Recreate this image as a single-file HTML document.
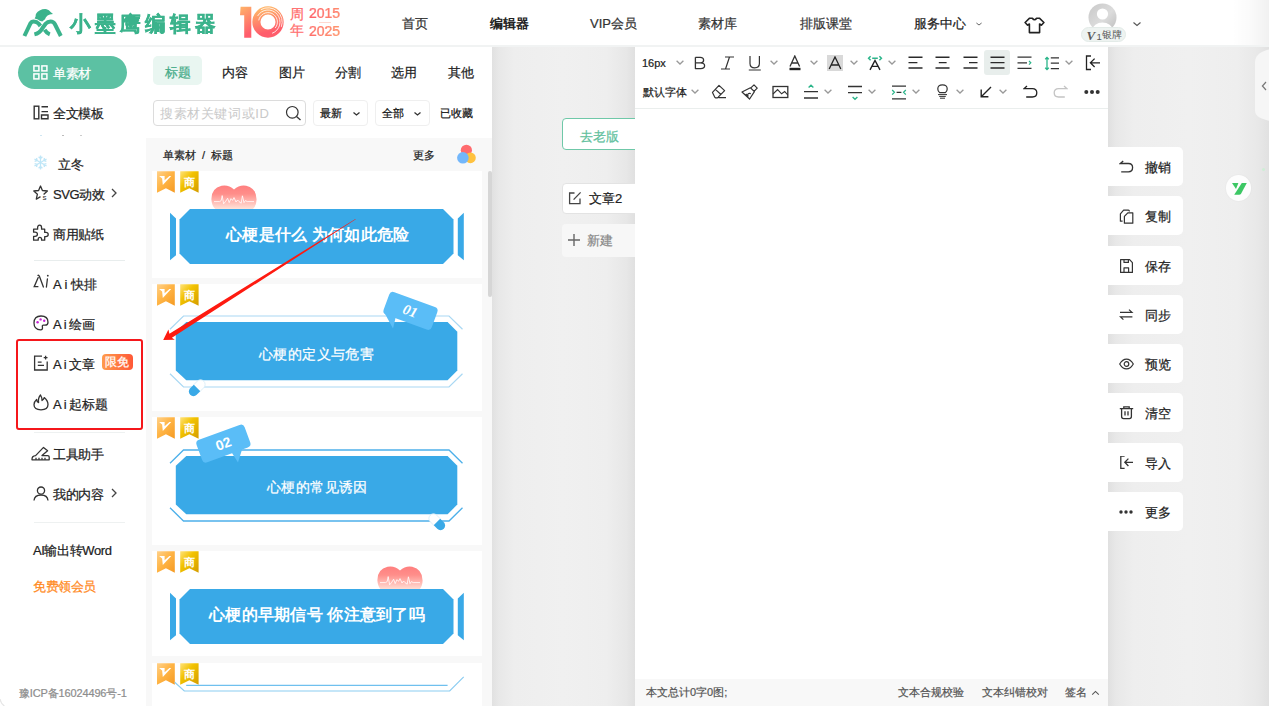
<!DOCTYPE html>
<html><head><meta charset="utf-8">
<style>
*{box-sizing:border-box;margin:0;padding:0}
html,body{width:1269px;height:706px;overflow:hidden}
body{position:relative;background:#efefef;font-family:"Liberation Sans",sans-serif;color:#222}
.a{position:absolute}
.t{position:absolute;white-space:nowrap;line-height:1;-webkit-text-stroke:0.22px}
</style></head><body>
<!-- gray bg shading -->
<div class="a" style="left:492px;top:45px;width:143px;height:661px;background:linear-gradient(90deg,#e1e1e1 0,#e8e8e8 7px,#eeeeee 22px,#f0f0f0 50%,#eeeeee 80%,#e7e7e7 94%,#e0e0e0 100%)"></div>
<div class="a" style="left:1108px;top:45px;width:161px;height:661px;background:linear-gradient(90deg,#e0e0e0 0,#e8e8e8 8px,#eeeeee 26px,#f0f0f0 50%,#eeeeee 80%,#e8e8e8 93%,#e1e1e1 100%)"></div>

<!-- header -->
<div class="a" style="left:0;top:0;width:1269px;height:45px;background:#fff"></div>
<div class="a" style="left:0;top:45px;width:1269px;height:2px;background:#f1f3f3"></div>
<div class="a" style="left:1232px;top:0;width:37px;height:45px;background:linear-gradient(90deg,rgba(0,0,0,0) 0,rgba(0,0,0,0.018) 50%,rgba(0,0,0,0.055) 100%)"></div>


<!-- logo -->
<svg class="a" style="left:20px;top:6px" width="46" height="34" viewBox="0 0 46 34">
<g fill="none" stroke="#3bb38c" stroke-width="4" stroke-linecap="butt">
<path d="M4.4,30 L10.2,17.8 Q11.4,15.5 13.8,15.5 Q16.8,15.5 18.8,17.8 L20.4,20"/>
<path d="M24.6,23.8 Q26.6,27.2 29.8,28.4"/>
<path d="M14.4,28.4 Q19.6,27.2 22.4,22.2 L25.6,17.8 Q27.6,15.5 30.6,15.5 Q33.4,15.5 34.8,18 L40.8,30"/>
</g>
<path fill="#3bb38c" d="M14.6,12.4 L15.6,10.6 Q15.2,6.6 19.6,4.4 Q23,2.8 26.6,3.2 Q29.2,3.7 30.6,6 L33,7.9 Q29.4,8.1 27.6,9.4 Q25.6,11 25,13.2 L22.2,15.6 Q19.4,14.8 17.8,13.4 Z"/>
</svg>
<div class="t" style="-webkit-text-stroke:0.4px #3bb38c;left:70px;top:12.5px;font-size:21px;font-weight:bold;letter-spacing:3.95px;color:#3bb38c;transform:scaleY(1.02)">小墨鹰编辑器</div>

<!-- 10 years logo -->
<svg class="a" style="left:238px;top:5px" width="50" height="35" viewBox="0 0 50 35">
<defs>
<linearGradient id="g10" x1="0" y1="0" x2="0.25" y2="1"><stop offset="0" stop-color="#ffb468"/><stop offset="1" stop-color="#ff5d6c"/></linearGradient>
</defs>
<path fill="url(#g10)" d="M2.6,1.8 L13.3,1.8 L13.3,32.8 L6.2,32.8 L6.2,10.2 L2,10.2 Z"/>
<circle cx="30" cy="17" r="11.6" fill="none" stroke="url(#g10)" stroke-width="8.1"/>
<path d="M20.74,15.37 A9.4,9.4 0 1 1 37.20,23.04 M19.61,11.00 A12.0,12.0 0 1 1 34.10,28.28 M22.90,4.70 A14.2,14.2 0 0 1 43.34,21.86" fill="none" stroke="#fff" stroke-width="0.85" opacity="0.95"/>
</svg>
<div class="t" style="left:290px;top:6px;font-size:14px;color:#ff6a6a;line-height:16px">周</div>
<div class="t" style="left:290px;top:22px;font-size:14px;color:#ff7070;line-height:16px">年</div>
<div class="t" style="left:309px;top:6px;font-size:14px;color:#ff6a6a;line-height:14px;background:linear-gradient(90deg,#ff5f6a,#ff8f6a);-webkit-background-clip:text;background-clip:text;-webkit-text-fill-color:transparent">2015</div>
<div class="t" style="left:309px;top:24px;font-size:14px;color:#ff7a6a;line-height:14px;background:linear-gradient(90deg,#ff6a6a,#ff9b6a);-webkit-background-clip:text;background-clip:text;-webkit-text-fill-color:transparent">2025</div>
<div class="a" style="left:319px;top:22px;width:12px;height:1px;background:#ffd9d0"></div>

<!-- nav -->
<div class="t" style="left:402px;top:17px;font-size:13px;color:#333">首页</div>
<div class="t" style="-webkit-text-stroke:0;left:490px;top:17px;font-size:13px;color:#222;font-weight:bold">编辑器</div>
<div class="t" style="left:590px;top:17px;font-size:13px;color:#333">VIP会员</div>
<div class="t" style="left:698px;top:17px;font-size:13px;color:#333">素材库</div>
<div class="t" style="left:800px;top:17px;font-size:13px;color:#333">排版课堂</div>
<div class="t" style="left:914px;top:17px;font-size:13px;color:#222">服务中心</div>
<svg class="a" style="left:975px;top:21px" width="8" height="6" viewBox="0 0 8 6"><path d="M1.4,2 L4,4 L6.6,2" fill="none" stroke="#666" stroke-width="1"/></svg>
<svg class="a" style="left:1024px;top:16px" width="21" height="18" viewBox="0 0 21 18"><path d="M5.6,2.2 H8.4 Q9.4,3.7 10.5,3.7 Q11.6,3.7 12.6,2.2 H15.4 L19.9,6.5 L17.4,9.2 L15.6,8 V16.6 H5.4 V8 L3.6,9.2 L1.1,6.5 Z" fill="none" stroke="#222" stroke-width="1.6" stroke-linejoin="round"/></svg>
<!-- avatar -->
<svg class="a" style="left:1088px;top:3px" width="30" height="26" viewBox="0 0 30 26">
<defs><clipPath id="avc"><circle cx="14.5" cy="14.5" r="14"/></clipPath>
<linearGradient id="avg" x1="0" y1="0" x2="1" y2="1"><stop offset="0" stop-color="#c8c8c8"/><stop offset="0.55" stop-color="#dcdcdc"/><stop offset="1" stop-color="#bdbdbd"/></linearGradient></defs>
<circle cx="14.5" cy="14.5" r="14" fill="url(#avg)"/>
<g clip-path="url(#avc)"><circle cx="14.5" cy="11" r="5.6" fill="#fff"/><ellipse cx="14.5" cy="27" rx="10" ry="7.5" fill="#fff"/></g>
</svg>
<div class="a" style="left:1081px;top:27px;width:45px;height:15px;border-radius:8px;background:#eef3f1;border:1px solid #e3ebe8"></div>
<div class="t" style="-webkit-text-stroke:0;left:1086.5px;top:29px;font-size:13px;font-family:'Liberation Serif',serif;font-style:italic;font-weight:bold;color:#5a5a5a">V</div>
<div class="t" style="-webkit-text-stroke:0;left:1096.5px;top:32px;font-size:9.5px;color:#5a5a5a">1</div>
<div class="t" style="-webkit-text-stroke:0;left:1102px;top:29.5px;font-size:10px;color:#5a5a5a">银牌</div>
<svg class="a" style="left:1132px;top:21px" width="10" height="6" viewBox="0 0 10 6"><path d="M1.5,1.5 L5,4.5 L8.5,1.5" fill="none" stroke="#555" stroke-width="1.1"/></svg>

<!-- sidebar -->
<div class="a" style="left:0;top:47px;width:146px;height:659px;background:#fff"></div>


<div class="a" style="left:18px;top:56px;width:109px;height:33px;border-radius:17px;background:#5cc1a3"></div>
<svg class="a" style="left:33px;top:65px" width="15" height="15" viewBox="0 0 15 15"><g fill="none" stroke="#fff" stroke-width="1.5"><rect x="0.9" y="0.9" width="5" height="5"/><rect x="8.9" y="0.9" width="5" height="5"/><rect x="0.9" y="8.9" width="5" height="5"/><rect x="8.9" y="8.9" width="5" height="5"/></g></svg>
<div class="t" style="left:53px;top:67px;font-size:13px;letter-spacing:-0.4px;color:#fff">单素材</div>

<svg class="a" style="left:33px;top:105px" width="16" height="15" viewBox="0 0 16 15"><g fill="none" stroke="#333" stroke-width="1.4"><rect x="1.2" y="1.2" width="4.6" height="12.6"/><path d="M8.5,1.7 H15 M8.5,6.6 H15 M8.5,10 H15 V13.8 H8.5 Z"/></g></svg>
<div class="t" style="left:53px;top:107px;font-size:13px;letter-spacing:-0.4px;color:#222">全文模板</div>
<div class="a" style="left:40px;top:135px;width:2px;height:1px;background:#cfe6f2"></div>
<div class="a" style="left:62px;top:135px;width:2px;height:1px;background:#bbb"></div>
<div class="a" style="left:80px;top:135px;width:2px;height:1px;background:#ccc"></div>

<svg class="a" style="left:33px;top:155px" width="15" height="15" viewBox="0 0 15 15"><g stroke="#bfe6f7" stroke-width="1.3" fill="none"><g transform="rotate(0 7.5 7.5)"><path d="M7.5,0.5 V14.5 M5.6,1.8 L7.5,3.6 L9.4,1.8 M5.6,13.2 L7.5,11.4 L9.4,13.2"/></g><g transform="rotate(60 7.5 7.5)"><path d="M7.5,0.5 V14.5 M5.6,1.8 L7.5,3.6 L9.4,1.8 M5.6,13.2 L7.5,11.4 L9.4,13.2"/></g><g transform="rotate(120 7.5 7.5)"><path d="M7.5,0.5 V14.5 M5.6,1.8 L7.5,3.6 L9.4,1.8 M5.6,13.2 L7.5,11.4 L9.4,13.2"/></g></g></svg>
<div class="t" style="left:58px;top:158px;font-size:13px;letter-spacing:-0.4px;color:#222">立冬</div>

<svg class="a" style="left:33px;top:185px" width="16" height="16" viewBox="0 0 16 16"><path d="M10.6,9.4 L14.4,6 L9.4,5.5 L7.5,1 L5.6,5.5 L0.8,6 L4.4,9.2 L3.3,14.2 L7.5,11.6" fill="none" stroke="#333" stroke-width="1.3" stroke-linejoin="round"/><text x="9.6" y="15.2" font-size="8" font-family="Liberation Sans" fill="#333">s</text></svg>
<div class="t" style="left:53px;top:188px;font-size:13px;letter-spacing:-0.4px;color:#222">SVG动效</div>
<svg class="a" style="left:110px;top:188px" width="8" height="10" viewBox="0 0 8 10"><path d="M2,1 L6,5 L2,9" fill="none" stroke="#444" stroke-width="1.3"/></svg>

<svg class="a" style="left:32px;top:224px" width="17" height="17" viewBox="0 0 17 17"><path d="M1.6,5.2 H5.6 V4 Q5.6,1.2 7.6,1.2 Q9.6,1.2 9.6,4 V5.2 H12.7 V8.4 H13.8 Q16.2,8.4 16.2,10.5 Q16.2,12.6 13.8,12.6 H12.7 V16.2 H9.6 V15.4 Q9.6,13.3 7.9,13.3 Q6.2,13.3 6.2,15.4 V16.2 H1.6 V12.4 H3 Q5.4,12.4 5.4,10.3 Q5.4,8.2 3,8.2 H1.6 Z" fill="none" stroke="#333" stroke-width="1.3" stroke-linejoin="round"/></svg>
<div class="t" style="left:53px;top:228px;font-size:13px;letter-spacing:-0.4px;color:#222">商用贴纸</div>

<div class="a" style="left:34px;top:260px;width:91px;height:1px;background:#e8eded"></div>

<svg class="a" style="left:33px;top:274px" width="16" height="15" viewBox="0 0 16 15"><g fill="none" stroke="#333" stroke-width="1.3" stroke-linecap="round"><path d="M5.2,3.6 L1.2,12.7 H4.9"/><path d="M5,1.3 Q6,1.1 6.5,2.6 L10.4,13"/><path d="M14.4,5 L13.4,13"/></g><circle cx="14.8" cy="1.7" r="0.9" fill="#333"/></svg>
<div class="t" style="left:53px;top:278px;font-size:13px;letter-spacing:-0.4px;color:#222;letter-spacing:0">A i 快排</div>

<svg class="a" style="left:33px;top:315px" width="16" height="16" viewBox="0 0 16 16"><path d="M8,1 Q15,1 15,7.2 Q15,10.2 12,10.2 H10.4 Q9,10.2 9.4,11.8 Q10,14.8 7.6,14.8 Q1,14.6 1,8 Q1,1 8,1 Z" fill="none" stroke="#333" stroke-width="1.3"/><circle cx="4.6" cy="7.2" r="1.2" fill="#c822d6"/><circle cx="7.6" cy="4.4" r="1.2" fill="#c822d6"/><circle cx="11.2" cy="5.8" r="1.2" fill="#c822d6"/></svg>
<div class="t" style="left:53px;top:318px;font-size:13px;letter-spacing:-0.4px;color:#222">A i 绘画</div>

<div class="a" style="left:16px;top:339px;width:127px;height:91px;border:2.6px solid #f5171b;border-radius:3px"></div>
<svg class="a" style="left:33px;top:355px" width="16" height="16" viewBox="0 0 16 16"><g fill="none" stroke="#333" stroke-width="1.3"><path d="M9,1.2 H1.6 V15 H14.2 V6.5"/><path d="M4.8,7.2 H8.6 M4.8,10.4 H11"/><path d="M12.6,0.8 V4.6 M10.7,2.7 H14.5"/></g></svg>
<div class="t" style="left:53px;top:358px;font-size:13px;letter-spacing:-0.4px;color:#222">A i 文章</div>
<div class="a" style="left:102px;top:354px;width:31px;height:16px;border-radius:4px;background:linear-gradient(90deg,#ff9b4c,#ff5837)"></div>
<div class="t" style="left:105px;top:356px;font-size:12px;color:#fff">限免</div>

<svg class="a" style="left:33px;top:394px" width="16" height="17" viewBox="0 0 16 17"><path d="M7.5,1 Q9.5,4.5 9,6.5 Q11,5.2 11.2,3.6 Q15,6.8 15,10.6 Q15,15.8 8,15.8 Q1,15.8 1,10.8 Q1,7.6 3.6,5.4 Q3.8,8 5.6,8.6 Q4.8,4.2 7.5,1 Z" fill="none" stroke="#333" stroke-width="1.3" stroke-linejoin="round"/></svg>
<div class="t" style="left:53px;top:398px;font-size:13px;letter-spacing:-0.4px;color:#222">A i 起标题</div>

<div class="a" style="left:34px;top:432px;width:91px;height:1px;background:#eef1f1"></div>

<svg class="a" style="left:31px;top:446px" width="19" height="15" viewBox="0 0 19 15"><g fill="none" stroke="#333" stroke-width="1.3" stroke-linejoin="round"><path d="M1,13.8 Q0.8,9.8 4.6,9.6 L12.5,1.4 L16.6,4.8 L11,9.6 H16.6 Q18.2,9.6 18.2,11 V13.8 Z"/><path d="M5,13.8 V11.8 M8,13.8 V11.8 M11,13.8 V11.8 M14,13.8 V11.8"/></g></svg>
<div class="t" style="left:53px;top:448px;font-size:13px;letter-spacing:-0.4px;color:#222">工具助手</div>

<svg class="a" style="left:33px;top:486px" width="16" height="15" viewBox="0 0 16 15"><g fill="none" stroke="#333" stroke-width="1.3"><circle cx="8" cy="4.6" r="3.6"/><path d="M1,14.5 Q1.5,9 8,9 Q14.5,9 15,14.5"/></g></svg>
<div class="t" style="left:53px;top:488px;font-size:13px;letter-spacing:-0.4px;color:#222">我的内容</div>
<svg class="a" style="left:110px;top:488px" width="8" height="10" viewBox="0 0 8 10"><path d="M2,1 L6,5 L2,9" fill="none" stroke="#444" stroke-width="1.3"/></svg>

<div class="a" style="left:34px;top:522px;width:91px;height:1px;background:#eef1f1"></div>

<div class="t" style="left:33px;top:544px;font-size:13px;letter-spacing:-0.4px;color:#222">AI输出转Word</div>
<div class="t" style="left:33px;top:580px;font-size:13px;letter-spacing:-0.4px;color:#ff8a1e">免费领会员</div>
<div class="t" style="left:19px;top:688px;font-size:11px;color:#8d8d8d;letter-spacing:-0.15px">豫ICP备16024496号-1</div>

<!-- material panel -->
<div class="a" style="left:146px;top:47px;width:346px;height:91px;background:#fff"></div>
<div class="a" style="left:146px;top:138px;width:346px;height:568px;background:#f8f8f8"></div>


<!-- tabs -->
<div class="a" style="left:153px;top:56px;width:49px;height:29px;border-radius:5px;background:#e9f6f1"></div>
<div class="t" style="left:165px;top:66px;font-size:13px;color:#45ab88">标题</div>
<div class="t" style="left:222px;top:66px;font-size:13px;color:#222">内容</div>
<div class="t" style="left:279px;top:66px;font-size:13px;color:#222">图片</div>
<div class="t" style="left:335px;top:66px;font-size:13px;color:#222">分割</div>
<div class="t" style="left:391px;top:66px;font-size:13px;color:#222">选用</div>
<div class="t" style="left:448px;top:66px;font-size:13px;color:#222">其他</div>
<!-- search -->
<div class="a" style="left:153px;top:100px;width:153px;height:26px;border:1px solid #dcdcdc;border-radius:4px;background:#fff"></div>
<div class="t" style="-webkit-text-stroke:0;left:160px;top:107px;font-size:13px;color:#c9c9c9;letter-spacing:0.6px">搜素材关键词或ID</div>
<svg class="a" style="left:285px;top:105px" width="17" height="16" viewBox="0 0 17 16"><circle cx="7.3" cy="7.3" r="5.8" fill="none" stroke="#333" stroke-width="1.2"/><path d="M11.5,11.5 L15.5,15" stroke="#333" stroke-width="1.3"/></svg>
<div class="a" style="left:313px;top:100px;width:55px;height:26px;border:1px solid #efefef;border-radius:4px;background:#fff"></div>
<div class="t" style="left:320px;top:108px;font-size:11px;color:#111">最新</div>
<svg class="a" style="left:352px;top:111px" width="9" height="6" viewBox="0 0 9 6"><path d="M1.5,1.5 L4.5,4 L7.5,1.5" fill="none" stroke="#333" stroke-width="1.3"/></svg>
<div class="a" style="left:375px;top:100px;width:55px;height:26px;border:1px solid #efefef;border-radius:4px;background:#fff"></div>
<div class="t" style="left:382px;top:108px;font-size:11px;color:#111">全部</div>
<svg class="a" style="left:413px;top:111px" width="9" height="6" viewBox="0 0 9 6"><path d="M1.5,1.5 L4.5,4 L7.5,1.5" fill="none" stroke="#333" stroke-width="1.3"/></svg>
<div class="t" style="left:440px;top:108px;font-size:11px;color:#111">已收藏</div>
<!-- breadcrumb -->
<div class="t" style="left:163px;top:150px;font-size:11px;color:#222">单素材&nbsp;&nbsp;/&nbsp;&nbsp;标题</div>
<div class="t" style="left:413px;top:150px;font-size:11px;color:#222">更多</div>
<svg class="a" style="left:455px;top:143px" width="22" height="22" viewBox="0 0 22 22"><circle cx="11.4" cy="7.3" r="5.6" fill="#ff6b6e"/><circle cx="15.4" cy="14.8" r="5.4" fill="#ffc23f"/><circle cx="7.9" cy="14.8" r="5.8" fill="#73b7fb"/></svg>
<!-- scrollbar -->
<div class="a" style="left:482px;top:171px;width:10px;height:535px;background:#f8f8f8"></div>
<div class="a" style="left:488px;top:171px;width:4px;height:126px;background:#d6d6d6;border-radius:2px"></div>

<svg width="0" height="0" style="position:absolute"><defs>
<linearGradient id="gV" x1="0" y1="0" x2="1" y2="1"><stop offset="0" stop-color="#ffd18a"/><stop offset="0.45" stop-color="#ffb546"/><stop offset="1" stop-color="#f59a22"/></linearGradient>
<linearGradient id="gS" x1="0" y1="0" x2="1" y2="1"><stop offset="0" stop-color="#ffe27a"/><stop offset="0.4" stop-color="#f2c200"/><stop offset="1" stop-color="#d49c00"/></linearGradient>
<linearGradient id="gH" x1="0" y1="0" x2="0" y2="1"><stop offset="0" stop-color="#ff7f7f"/><stop offset="0.35" stop-color="#ff8e8a"/><stop offset="1" stop-color="#ffe6dc"/></linearGradient>
</defs></svg>
<!-- card1 -->
<div class="a" style="left:152px;top:171px;width:330px;height:107px;background:#fff"></div>
<svg class="a" style="left:156px;top:171px" width="44" height="23" viewBox="0 0 44 23">
<path d="M1,0.2 H18.8 V21.8 L9.9,17.2 L1,21.8 Z" fill="url(#gV)"/>
<path d="M3.1,5 H8.6 V9.2 L13.4,5 H15.2 L6.8,14 L6.1,7.6 Z" fill="#fff"/>
<path d="M24.2,0.2 H42.6 V21.8 L33.4,17.2 L24.2,21.8 Z" fill="url(#gS)"/>
<text x="33.5" y="14.6" text-anchor="middle" font-size="11" font-weight="bold" fill="#fff" font-family="Liberation Sans">商</text>
</svg>
<svg class="a" style="left:211px;top:185px" width="46" height="25" viewBox="0 0 46 25">
<path d="M23,4.6 Q17.5,-0.6 10.6,0.8 Q0.2,3.2 0.4,14.4 Q0.6,20.4 4.6,24.6 H41.6 Q45.6,20.4 45.6,14.4 Q45.4,3.2 35.2,0.8 Q28.4,-0.4 23,4.6 Z" fill="url(#gH)"/>
<path d="M3,16.6 H8.6 L10.2,15.6 L11.2,10.6 L12.6,18.8 L14.8,16.2 L16.6,13.2 L18.2,17.6 L20,13.6 L21.6,15.4 L23,12.6 L25,17 L26.6,15 L28,16.6 L30.2,18.2 L31.4,10.8 L33,17.6 L34.4,15.6 L36.2,16.6 H43" fill="none" stroke="#fff" stroke-width="0.8"/>
</svg>
<svg class="a" style="left:166px;top:209px" width="302" height="56" viewBox="0 0 302 56">
<path d="M4,3.8 L10,9.4 V46.2 L4,51.2 Z" fill="#39a9e7"/>
<path d="M24,0 H277 L287.5,10.5 V44.5 L277,55 H24 L13.5,44.5 V10.5 Z" fill="#39a9e7"/>
<path d="M297.8,3.8 L291.8,9.4 V46.2 L297.8,51.2 Z" fill="#39a9e7"/>
</svg>
<div class="t" style="-webkit-text-stroke:0;left:226px;top:227px;font-size:16px;font-weight:bold;letter-spacing:0.25px;color:#fff">心梗是什么 为何如此危险</div>

<!-- card2 -->
<div class="a" style="left:152px;top:284px;width:330px;height:127px;background:#fff"></div>
<svg class="a" style="left:156px;top:284px" width="44" height="23" viewBox="0 0 44 23">
<path d="M1,0.2 H18.8 V21.8 L9.9,17.2 L1,21.8 Z" fill="url(#gV)"/>
<path d="M3.1,5 H8.6 V9.2 L13.4,5 H15.2 L6.8,14 L6.1,7.6 Z" fill="#fff"/>
<path d="M24.2,0.2 H42.6 V21.8 L33.4,17.2 L24.2,21.8 Z" fill="url(#gS)"/>
<text x="33.5" y="14.6" text-anchor="middle" font-size="11" font-weight="bold" fill="#fff" font-family="Liberation Sans">商</text>
</svg>
<svg class="a" style="left:166px;top:315px" width="302" height="74" viewBox="0 0 302 74">
<path d="M4,14.3 L17.5,1 H283 L296.5,14.3 M4,58.7 L17.5,72 H283 L296.5,58.7" fill="none" stroke="#a9d8f3" stroke-width="1.2"/>
<path d="M20.3,7 H281.6 L291.3,16.7 V55.6 L281.6,65.3 H20.3 L9.8,55.6 V16.7 Z" fill="#39a9e7"/>
</svg>
<div class="t" style="left:259px;top:347px;font-size:14px;letter-spacing:0.4px;color:#fff">心梗的定义与危害</div>
<svg class="a" style="left:378px;top:288px" width="64" height="46" viewBox="0 0 64 46">
<g transform="translate(32.5,22.9) rotate(20.2)">
<rect x="-25.6" y="-12" width="51.2" height="24" rx="4" fill="#5abdf7"/>
</g>
<path d="M6,24 L15,40.6 L18,28 Z" fill="#5abdf7"/>
<text x="32.3" y="28" text-anchor="middle" transform="rotate(20.2 32.5 22.9)" font-size="14.5" font-weight="bold" font-style="italic" fill="#fff" font-family="Liberation Serif">01</text>
</svg>
<svg class="a" style="left:186px;top:377px" width="22" height="22" viewBox="0 0 22 22">
<g transform="translate(11,11) rotate(-45)">
<path d="M0,-4.6 H5 A4.6,4.6 0 0 1 5,4.6 H0 Z" fill="#fff" stroke="#d7ecf7" stroke-width="0.8"/>
<path d="M0,-4.6 H-5 A4.6,4.6 0 0 0 -5,4.6 H0 Z" fill="#39a9e7"/>
</g></svg>

<!-- card3 -->
<div class="a" style="left:152px;top:417px;width:330px;height:128px;background:#fff"></div>
<svg class="a" style="left:156px;top:417px" width="44" height="23" viewBox="0 0 44 23">
<path d="M1,0.2 H18.8 V21.8 L9.9,17.2 L1,21.8 Z" fill="url(#gV)"/>
<path d="M3.1,5 H8.6 V9.2 L13.4,5 H15.2 L6.8,14 L6.1,7.6 Z" fill="#fff"/>
<path d="M24.2,0.2 H42.6 V21.8 L33.4,17.2 L24.2,21.8 Z" fill="url(#gS)"/>
<text x="33.5" y="14.6" text-anchor="middle" font-size="11" font-weight="bold" fill="#fff" font-family="Liberation Sans">商</text>
</svg>
<svg class="a" style="left:166px;top:448.6px" width="302" height="74" viewBox="0 0 302 74">
<path d="M4,14.3 L17.5,1 H283 L296.5,14.3 M4,58.7 L17.5,72 H283 L296.5,58.7" fill="none" stroke="#4db0ea" stroke-width="1.3"/>
<path d="M20.3,7 H281.6 L291.3,16.7 V55.6 L281.6,65.3 H20.3 L9.8,55.6 V16.7 Z" fill="#39a9e7"/>
</svg>
<div class="t" style="left:267px;top:480px;font-size:14px;letter-spacing:0.4px;color:#fff">心梗的常见诱因</div>
<svg class="a" style="left:188px;top:417px" width="68" height="50" viewBox="0 0 68 50">
<g transform="translate(35.4,26.6) rotate(-20.2)">
<rect x="-25.6" y="-12" width="51.2" height="24" rx="4" fill="#5abdf7"/>
</g>
<path d="M44,36 L50,45.5 L56,26 Z" fill="#5abdf7"/>
<text x="35.4" y="31.6" text-anchor="middle" transform="rotate(-20.2 35.4 26.6)" font-size="14" font-weight="bold" fill="#fff" font-family="Liberation Sans">02</text>
</svg>
<svg class="a" style="left:426px;top:511px" width="22" height="22" viewBox="0 0 22 22">
<g transform="translate(11,11) rotate(45)">
<path d="M0,-4.6 H-5 A4.6,4.6 0 0 0 -5,4.6 H0 Z" fill="#fff" stroke="#d7ecf7" stroke-width="0.8"/>
<path d="M0,-4.6 H5 A4.6,4.6 0 0 1 5,4.6 H0 Z" fill="#39a9e7"/>
</g></svg>

<!-- card4 -->
<div class="a" style="left:152px;top:551px;width:330px;height:105px;background:#fff"></div>
<svg class="a" style="left:156px;top:551px" width="44" height="23" viewBox="0 0 44 23">
<path d="M1,0.2 H18.8 V21.8 L9.9,17.2 L1,21.8 Z" fill="url(#gV)"/>
<path d="M3.1,5 H8.6 V9.2 L13.4,5 H15.2 L6.8,14 L6.1,7.6 Z" fill="#fff"/>
<path d="M24.2,0.2 H42.6 V21.8 L33.4,17.2 L24.2,21.8 Z" fill="url(#gS)"/>
<text x="33.5" y="14.6" text-anchor="middle" font-size="11" font-weight="bold" fill="#fff" font-family="Liberation Sans">商</text>
</svg>
<svg class="a" style="left:377px;top:566px" width="46" height="25" viewBox="0 0 46 25">
<path d="M23,4.6 Q17.5,-0.6 10.6,0.8 Q0.2,3.2 0.4,14.4 Q0.6,20.4 4.6,24.6 H41.6 Q45.6,20.4 45.6,14.4 Q45.4,3.2 35.2,0.8 Q28.4,-0.4 23,4.6 Z" fill="url(#gH)"/>
<path d="M3,16.6 H8.6 L10.2,15.6 L11.2,10.6 L12.6,18.8 L14.8,16.2 L16.6,13.2 L18.2,17.6 L20,13.6 L21.6,15.4 L23,12.6 L25,17 L26.6,15 L28,16.6 L30.2,18.2 L31.4,10.8 L33,17.6 L34.4,15.6 L36.2,16.6 H43" fill="none" stroke="#fff" stroke-width="0.8"/>
</svg>
<svg class="a" style="left:166px;top:589px" width="302" height="56" viewBox="0 0 302 56">
<path d="M4,3.8 L10,9.4 V46.2 L4,51.2 Z" fill="#39a9e7"/>
<path d="M24,0 H277 L287.5,10.5 V44.5 L277,55 H24 L13.5,44.5 V10.5 Z" fill="#39a9e7"/>
<path d="M297.8,3.8 L291.8,9.4 V46.2 L297.8,51.2 Z" fill="#39a9e7"/>
</svg>
<div class="t" style="-webkit-text-stroke:0;left:209px;top:607px;font-size:16px;font-weight:bold;letter-spacing:0.25px;color:#fff">心梗的早期信号 你注意到了吗</div>

<!-- card5 -->
<div class="a" style="left:152px;top:663px;width:330px;height:43px;background:#fff"></div>
<svg class="a" style="left:156px;top:663px" width="44" height="23" viewBox="0 0 44 23">
<path d="M1,0.2 H18.8 V21.8 L9.9,17.2 L1,21.8 Z" fill="url(#gV)"/>
<path d="M3.1,5 H8.6 V9.2 L13.4,5 H15.2 L6.8,14 L6.1,7.6 Z" fill="#fff"/>
<path d="M24.2,0.2 H42.6 V21.8 L33.4,17.2 L24.2,21.8 Z" fill="url(#gS)"/>
<text x="33.5" y="14.6" text-anchor="middle" font-size="11" font-weight="bold" fill="#fff" font-family="Liberation Sans">商</text>
</svg>
<svg class="a" style="left:166px;top:670px" width="302" height="30" viewBox="0 0 302 30">
<path d="M8.7,12.2 L18.3,21 H283.7 L297.7,6.8" fill="none" stroke="#8ccdf1" stroke-width="1.2"/>
<path d="M20.2,15.4 H281.6" fill="none" stroke="#6fc0ee" stroke-width="1.2"/>
</svg>



<svg class="a" style="left:0;top:0" width="1269" height="706" viewBox="0 0 1269 706"><path d="M163.2,340 L168.4,329.6 L169.4,333.8 L355.4,218.9 L355.8,219.3 L171.9,337.8 L174.8,339.7 Z" fill="#fe1a10"/></svg>

<!-- middle -->
<div class="a" style="left:562px;top:118px;width:90px;height:32px;border:1px solid #6fc8a8;border-radius:4px;background:#fff"></div>
<div class="t" style="left:580px;top:130px;font-size:13px;color:#62bf9d">去老版</div>
<div class="a" style="left:562px;top:183px;width:90px;height:31px;border:1px solid #e3e3e3;border-radius:4px;background:#fff"></div>
<svg class="a" style="left:568px;top:191px" width="14" height="14" viewBox="0 0 14 14"><g fill="none" stroke="#444" stroke-width="1.3"><path d="M6.5,2 H1.6 V12.6 H12 V7.6"/><path d="M5.6,8.6 L12.6,1.4"/></g></svg>
<div class="t" style="left:589px;top:192px;font-size:13px;color:#222">文章2</div>
<div class="a" style="left:562px;top:224px;width:90px;height:33px;border-radius:4px;background:#f7f7f7"></div>
<svg class="a" style="left:567px;top:233px" width="14" height="14" viewBox="0 0 14 14"><path d="M7,1 V13 M1,7 H13" stroke="#666" stroke-width="1.4"/></svg>
<div class="t" style="left:587px;top:234px;font-size:13px;color:#888">新建</div>

<!-- editor -->
<div class="a" style="left:635px;top:47px;width:473px;height:659px;background:#fff"></div>
<div class="a" style="left:635px;top:108px;width:473px;height:1px;background:#eaeeed"></div>
<div class="a" style="left:635px;top:679px;width:473px;height:27px;background:#f8f8f8"></div>


<!-- toolbar row1 -->
<div class="t" style="left:642px;top:58px;font-size:11px;color:#222">16px</div>
<svg class="a" style="left:676px;top:60px" width="8" height="5" viewBox="0 0 8 5"><path d="M0.6,0.7 L4,4 L7.4,0.7" fill="none" stroke="#999" stroke-width="1.3"/></svg>
<svg class="a" style="left:694px;top:56px" width="12" height="14" viewBox="0 0 12 14"><path d="M1.4,1.3 H6.2 Q9.6,1.3 9.6,4.2 Q9.6,6.9 6.4,6.9 H1.4 M6.4,6.9 Q10.6,6.9 10.6,9.8 Q10.6,12.6 6.8,12.6 H1.4 V1.3" fill="none" stroke="#333" stroke-width="1.3" stroke-linejoin="round"/></svg>
<svg class="a" style="left:720px;top:56px" width="15" height="14" viewBox="0 0 15 14"><path d="M5,1 H14 M9.5,1 L5.5,13 M1,13 H10" fill="none" stroke="#333" stroke-width="1.2"/></svg>
<svg class="a" style="left:748px;top:55px" width="14" height="16" viewBox="0 0 14 16"><path d="M2,1 V8.5 Q2,12.8 6.7,12.8 Q11.4,12.8 11.4,8.5 V1 M0.8,15 H12.8" fill="none" stroke="#333" stroke-width="1.2"/></svg>
<svg class="a" style="left:770px;top:60px" width="8" height="5" viewBox="0 0 8 5"><path d="M0.6,0.7 L4,4 L7.4,0.7" fill="none" stroke="#999" stroke-width="1.3"/></svg>
<svg class="a" style="left:788px;top:55px" width="14" height="16" viewBox="0 0 14 16"><path d="M2,11.4 L6.8,1 L11.6,11.4 M3.6,8 H10" fill="none" stroke="#333" stroke-width="1.3"/><rect x="1.5" y="12.8" width="11" height="2.4" fill="#222"/></svg>
<svg class="a" style="left:810px;top:60px" width="8" height="5" viewBox="0 0 8 5"><path d="M0.6,0.7 L4,4 L7.4,0.7" fill="none" stroke="#999" stroke-width="1.3"/></svg>
<div class="a" style="left:827px;top:55px;width:16px;height:16px;background:#d9d9d9"></div>
<svg class="a" style="left:828px;top:56px" width="14" height="14" viewBox="0 0 14 14"><path d="M1.2,13 L7,1 L12.8,13 M3.2,9 H10.8" fill="none" stroke="#222" stroke-width="1.3"/></svg>
<svg class="a" style="left:850px;top:60px" width="8" height="5" viewBox="0 0 8 5"><path d="M0.6,0.7 L4,4 L7.4,0.7" fill="none" stroke="#999" stroke-width="1.3"/></svg>
<svg class="a" style="left:867px;top:55px" width="16" height="16" viewBox="0 0 16 16"><path d="M3.6,1.2 L1.6,3.2 L3.6,5.2 M12.4,1.2 L14.4,3.2 L12.4,5.2 M5.2,3.2 H10.8" fill="none" stroke="#2bb58a" stroke-width="1.5"/><path d="M3,14.8 L8,5.4 L13,14.8 M4.8,11.4 H11.2" fill="none" stroke="#222" stroke-width="1.4"/></svg>
<svg class="a" style="left:888px;top:60px" width="8" height="5" viewBox="0 0 8 5"><path d="M0.6,0.7 L4,4 L7.4,0.7" fill="none" stroke="#999" stroke-width="1.3"/></svg>
<svg class="a" style="left:908px;top:56px" width="15" height="13" viewBox="0 0 15 13"><path d="M0.5,1.2 H14.5 M0.5,12 H14.5 M0.5,6.6 H9.4" fill="none" stroke="#2a2a2a" stroke-width="1.4"/></svg>
<svg class="a" style="left:935px;top:56px" width="15" height="13" viewBox="0 0 15 13"><path d="M0.5,1.2 H14.5 M0.5,12 H14.5 M3.8,6.6 H11.6" fill="none" stroke="#2a2a2a" stroke-width="1.4"/></svg>
<svg class="a" style="left:963px;top:56px" width="15" height="13" viewBox="0 0 15 13"><path d="M0.5,1.2 H14.5 M0.5,12 H14.5 M6,6.6 H14.5" fill="none" stroke="#2a2a2a" stroke-width="1.4"/></svg>
<div class="a" style="left:984px;top:50px;width:26px;height:25px;border-radius:3px;background:#e8eeec"></div>
<svg class="a" style="left:990px;top:56px" width="15" height="13" viewBox="0 0 15 13"><path d="M0.5,1.2 H14.5 M0.5,12 H14.5 M0.5,6.6 H14.5" fill="none" stroke="#2a2a2a" stroke-width="1.4"/></svg>
<svg class="a" style="left:1017px;top:56px" width="15" height="14" viewBox="0 0 15 14"><path d="M0.5,1.2 H14.5 M0.5,6.8 H10 M0.5,12.4 H14.5" fill="none" stroke="#333" stroke-width="1.2"/><path d="M12,5 L13.8,6.8 L12,8.6" fill="none" stroke="#2bb58a" stroke-width="1.2"/></svg>
<svg class="a" style="left:1044px;top:56px" width="16" height="15" viewBox="0 0 16 15"><path d="M3,1.5 V13.5 M1.2,3.3 L3,1.5 L4.8,3.3 M1.2,11.7 L3,13.5 L4.8,11.7" fill="none" stroke="#2bb58a" stroke-width="1.3"/><path d="M6.8,1.8 H15 M6.8,7.2 H15 M6.8,12.7 H15" fill="none" stroke="#333" stroke-width="1.2"/></svg>
<svg class="a" style="left:1065px;top:60px" width="8" height="5" viewBox="0 0 8 5"><path d="M0.6,0.7 L4,4 L7.4,0.7" fill="none" stroke="#999" stroke-width="1.3"/></svg>
<svg class="a" style="left:1085px;top:55px" width="16" height="16" viewBox="0 0 16 16"><path d="M6,1 H1.5 V14.5 H6 M15,7.8 H5.5 M9.6,3.6 L5.4,7.8 L9.6,12" fill="none" stroke="#222" stroke-width="1.3"/></svg>

<!-- toolbar row2 -->
<div class="t" style="left:643px;top:87px;font-size:11px;color:#222">默认字体</div>
<svg class="a" style="left:691px;top:89px" width="8" height="5" viewBox="0 0 8 5"><path d="M0.6,0.7 L4,4 L7.4,0.7" fill="none" stroke="#999" stroke-width="1.3"/></svg>
<svg class="a" style="left:711px;top:84px" width="16" height="15" viewBox="0 0 16 15"><path d="M1.5,8.4 L8,1.4 L13.6,6.6 L7.2,13.2 Q5.4,14.6 3.8,13.2 Z M4.4,5.4 L10.2,10.8 M7.4,13.6 H15" fill="none" stroke="#333" stroke-width="1.2" stroke-linejoin="round"/></svg>
<svg class="a" style="left:741px;top:84px" width="17" height="16" viewBox="0 0 17 16"><path d="M1,8 L8.6,15 L13.4,7.6 L9.4,3.8 Z M9.6,4.2 L13,0.8 L16.2,4.2 L13,7.4 M4.8,10 L7,12.2 Q6.2,8.4 9.8,9.6" fill="none" stroke="#333" stroke-width="1.2" stroke-linejoin="round"/></svg>
<svg class="a" style="left:772px;top:85px" width="17" height="14" viewBox="0 0 17 14"><rect x="1" y="1.5" width="14.8" height="11" fill="none" stroke="#333" stroke-width="1.3"/><path d="M1,9 L5.6,4.6 L9.6,8.8 L12.7,6.6 L15.8,10" fill="none" stroke="#333" stroke-width="1.1"/></svg>
<svg class="a" style="left:803px;top:84px" width="16" height="16" viewBox="0 0 16 16"><path d="M5.6,3.4 L8,1.2 L10.4,3.4" fill="none" stroke="#2bb58a" stroke-width="1.4"/><path d="M1,7.6 H15 M1,14 H15" fill="none" stroke="#333" stroke-width="1.3"/></svg>
<svg class="a" style="left:824px;top:89px" width="8" height="5" viewBox="0 0 8 5"><path d="M0.6,0.7 L4,4 L7.4,0.7" fill="none" stroke="#999" stroke-width="1.3"/></svg>
<svg class="a" style="left:847px;top:85px" width="16" height="16" viewBox="0 0 16 16"><path d="M1,1.5 H15 M1,7.6 H15" fill="none" stroke="#333" stroke-width="1.3"/><path d="M5.6,12 L8,14.3 L10.4,12" fill="none" stroke="#2bb58a" stroke-width="1.4"/></svg>
<svg class="a" style="left:868px;top:89px" width="8" height="5" viewBox="0 0 8 5"><path d="M0.6,0.7 L4,4 L7.4,0.7" fill="none" stroke="#999" stroke-width="1.3"/></svg>
<svg class="a" style="left:891px;top:85px" width="16" height="15" viewBox="0 0 16 15"><path d="M1,1.2 H15 M1,13.8 H15 M5.6,7.3 H10.4" fill="none" stroke="#333" stroke-width="1.3"/><path d="M1.2,5 L3.4,7.3 L1.2,9.6 M14.8,5 L12.6,7.3 L14.8,9.6" fill="none" stroke="#2bb58a" stroke-width="1.3"/></svg>
<svg class="a" style="left:912px;top:89px" width="8" height="5" viewBox="0 0 8 5"><path d="M0.6,0.7 L4,4 L7.4,0.7" fill="none" stroke="#999" stroke-width="1.3"/></svg>
<svg class="a" style="left:937px;top:84px" width="11" height="15" viewBox="0 0 11 15"><path d="M2.6,8.6 Q0.8,7 0.8,5 Q0.8,0.8 5.5,0.8 Q10.2,0.8 10.2,5 Q10.2,7 8.4,8.6 Z" fill="none" stroke="#333" stroke-width="1.2"/><path d="M1,10.6 H10 M2.2,12.4 H8.8 M3,14.2 H8" stroke="#333" stroke-width="1"/></svg>
<svg class="a" style="left:956px;top:89px" width="8" height="5" viewBox="0 0 8 5"><path d="M0.6,0.7 L4,4 L7.4,0.7" fill="none" stroke="#999" stroke-width="1.3"/></svg>
<svg class="a" style="left:980px;top:86px" width="12" height="12" viewBox="0 0 12 12"><path d="M11,1 L1.5,10.5 M1.2,3.6 V10.8 H8.4" fill="none" stroke="#222" stroke-width="1.4"/></svg>
<svg class="a" style="left:999px;top:89px" width="8" height="5" viewBox="0 0 8 5"><path d="M0.6,0.7 L4,4 L7.4,0.7" fill="none" stroke="#999" stroke-width="1.3"/></svg>
<svg class="a" style="left:1023px;top:85px" width="15" height="13" viewBox="0 0 15 13"><path d="M4,1 L1.2,3.6 H9.4 Q13.8,3.6 13.8,7.8 Q13.8,12 9.4,12 H3.2" fill="none" stroke="#222" stroke-width="1.3"/></svg>
<svg class="a" style="left:1053px;top:85px" width="15" height="13" viewBox="0 0 15 13"><path d="M11,1 L13.8,3.6 H5.6 Q1.2,3.6 1.2,7.8 Q1.2,12 5.6,12 H11.8" fill="none" stroke="#c4c4c4" stroke-width="1.3"/></svg>
<svg class="a" style="left:1084px;top:89px" width="16" height="6" viewBox="0 0 16 6"><circle cx="2.3" cy="3" r="2" fill="#333"/><circle cx="8" cy="3" r="2" fill="#333"/><circle cx="13.7" cy="3" r="2" fill="#333"/></svg>

<!-- status bar -->
<div class="t" style="left:646px;top:687px;font-size:11px;color:#555">本文总计0字0图;</div>
<div class="t" style="left:898px;top:687px;font-size:11px;color:#555">文本合规校验</div>
<div class="t" style="left:982px;top:687px;font-size:11px;color:#555">文本纠错校对</div>
<div class="t" style="left:1065px;top:687px;font-size:11px;color:#555">签名</div>
<svg class="a" style="left:1091px;top:690px" width="9" height="6" viewBox="0 0 9 6"><path d="M1.2,4.6 L4.5,1.4 L7.8,4.6" fill="none" stroke="#555" stroke-width="1.1"/></svg>

<!-- right buttons -->
<div class="a" style="left:1108px;top:147px;width:75px;height:39px;border-radius:0 5px 5px 0;background:#fff"></div>
<svg class="a" style="left:1119px;top:160px" width="15" height="15" viewBox="0 0 15 15"><path d="M4.2,1.1 L1.4,3.5 H9.4 Q13.6,3.5 13.6,7.6 Q13.6,11.8 9.4,11.8 H2.2" fill="none" stroke="#333" stroke-width="1.3"/></svg>
<div class="t" style="left:1145px;top:161px;font-size:13px;color:#222">撤销</div>
<div class="a" style="left:1108px;top:196px;width:75px;height:39px;border-radius:0 5px 5px 0;background:#fff"></div>
<svg class="a" style="left:1119px;top:209px" width="15" height="15" viewBox="0 0 15 15"><path d="M3.6,12.2 H1.4 V4.8 L4.6,1.2 H9.4 Q10.4,1.2 10.4,2.6" fill="none" stroke="#333" stroke-width="1.2" stroke-linejoin="round"/><path d="M5.4,14.2 V7.4 L8.8,3.8 H13.8 V14.2 Z" fill="none" stroke="#333" stroke-width="1.2" stroke-linejoin="round"/></svg>
<div class="t" style="left:1145px;top:210px;font-size:13px;color:#222">复制</div>
<div class="a" style="left:1108px;top:246px;width:75px;height:39px;border-radius:0 5px 5px 0;background:#fff"></div>
<svg class="a" style="left:1119px;top:259px" width="15" height="15" viewBox="0 0 15 15"><path d="M1.6,0.6 H10.6 L13.4,3.6 V13.4 H1.6 Z M5,0.6 V3.4 H9.4 V0.6 M5,13.4 V8.8 H9.6 V13.4" fill="none" stroke="#333" stroke-width="1.2" stroke-linejoin="round"/></svg>
<div class="t" style="left:1145px;top:260px;font-size:13px;color:#222">保存</div>
<div class="a" style="left:1108px;top:295px;width:75px;height:39px;border-radius:0 5px 5px 0;background:#fff"></div>
<svg class="a" style="left:1119px;top:308px" width="15" height="15" viewBox="0 0 15 15"><path d="M1,4.4 H13 L10,1.6 M13.4,8.8 H1.4 L4.4,11.6" fill="none" stroke="#333" stroke-width="1.2"/></svg>
<div class="t" style="left:1145px;top:309px;font-size:13px;color:#222">同步</div>
<div class="a" style="left:1108px;top:344px;width:75px;height:39px;border-radius:0 5px 5px 0;background:#fff"></div>
<svg class="a" style="left:1119px;top:357px" width="15" height="15" viewBox="0 0 15 15"><path d="M0.7,7 C3,3 5,2.1 7.5,2.1 C10,2.1 12,3 14.3,7 C12,11 10,11.9 7.5,11.9 C5,11.9 3,11 0.7,7 Z" fill="none" stroke="#333" stroke-width="1.2"/><circle cx="7.5" cy="7" r="2.3" fill="none" stroke="#333" stroke-width="1.2"/></svg>
<div class="t" style="left:1145px;top:358px;font-size:13px;color:#222">预览</div>
<div class="a" style="left:1108px;top:393px;width:75px;height:39px;border-radius:0 5px 5px 0;background:#fff"></div>
<svg class="a" style="left:1119px;top:406px" width="15" height="15" viewBox="0 0 15 15"><path d="M0.8,2.6 H14.2 M4.8,2.6 V0.8 H10.2 V2.6 M2.6,2.6 V10.6 Q2.6,12.6 4.6,12.6 H10.4 Q12.4,12.6 12.4,10.6 V2.6 M6,5.2 V9.6 M9,5.2 V9.6" fill="none" stroke="#333" stroke-width="1.3"/></svg>
<div class="t" style="left:1145px;top:407px;font-size:13px;color:#222">清空</div>
<div class="a" style="left:1108px;top:443px;width:75px;height:39px;border-radius:0 5px 5px 0;background:#fff"></div>
<svg class="a" style="left:1119px;top:456px" width="15" height="15" viewBox="0 0 15 15"><path d="M5.6,0.2 H1.8 V12.4 H5.6 M14,6.3 H6 M9.4,2.6 L5.8,6.3 L9.4,10" fill="none" stroke="#333" stroke-width="1.3"/></svg>
<div class="t" style="left:1145px;top:457px;font-size:13px;color:#222">导入</div>
<div class="a" style="left:1108px;top:492px;width:75px;height:39px;border-radius:0 5px 5px 0;background:#fff"></div>
<svg class="a" style="left:1119px;top:505px" width="15" height="15" viewBox="0 0 15 15"><circle cx="2" cy="7" r="1.7" fill="#333"/><circle cx="7" cy="7" r="1.7" fill="#333"/><circle cx="12" cy="7" r="1.7" fill="#333"/></svg>
<div class="t" style="left:1145px;top:506px;font-size:13px;color:#222">更多</div>

<svg class="a" style="left:1254px;top:45px" width="15" height="80" viewBox="0 0 15 80"><path d="M15,4.6 C10,5.6 1,8.6 1,17.6 V65.6 C1,72.6 10,74.6 15,75.8 Z" fill="#f6f6f6"/></svg>
<svg class="a" style="left:1261px;top:81px" width="6" height="10" viewBox="0 0 6 10"><path d="M5,1 L1.4,5 L5,9" fill="none" stroke="#777" stroke-width="1.2"/></svg>
<div class="a" style="left:1225.5px;top:175px;width:25.5px;height:25.5px;border-radius:13px;background:#fdfdfd;box-shadow:0 0 2px rgba(0,0,0,0.06)"></div>
<svg class="a" style="left:1230px;top:180px" width="18" height="16" viewBox="0 0 18 16"><path d="M2,3.1 H8.4 L6,9 Z" fill="#3cc764"/><path d="M11.8,3.1 H16.8 L11.2,13.4 Q10.4,14.7 9,14.7 H4.2 Z" fill="#3cc764"/></svg>
<div class="a" style="left:1262px;top:168px;width:3px;height:3px;border-radius:2px;background:#cdeed5"></div>

<svg class="a" style="left:0;top:696px" width="8" height="10" viewBox="0 0 8 10"><path d="M0,3 Q0.8,7.6 4.4,10" fill="none" stroke="#e6e6e6" stroke-width="1.2"/></svg>
</body></html>
